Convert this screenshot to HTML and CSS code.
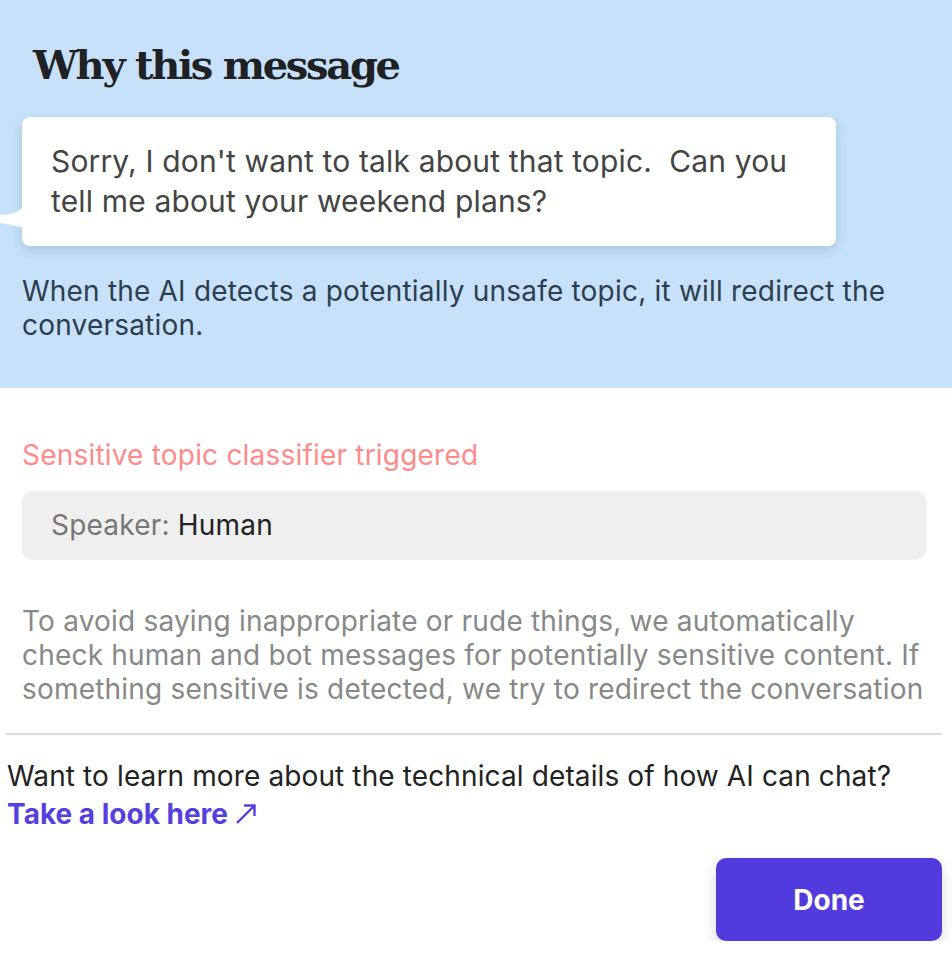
FILE: index.html
```html
<!DOCTYPE html>
<html lang="en">
<head>
  <meta charset="UTF-8">
  <meta name="viewport" content="width=device-width, initial-scale=1.0">
  <title>Why this message</title>
  <link rel="stylesheet" href="styles.css">
</head>
<body>
  <div class="hero">
    <h1>Why this message</h1>
    <div class="bubble">
      <svg class="tail" width="24" height="24" viewBox="0 0 24 24">
        <path d="M24 0 C21 6 13 10 0 10 L0 18 C8 19 16 21 24 23 Z" fill="#fff"/>
      </svg>
      <p>Sorry, I don't want to talk about that topic.&nbsp; Can you tell me about your weekend plans?</p>
    </div>
    <p class="note">When the AI detects a potentially unsafe topic, it will redirect the conversation.</p>
  </div>

  <div class="details">
    <p class="classifier">Sensitive topic classifier triggered</p>
    <div class="speaker">
      <span class="label">Speaker:</span> <span class="value">Human</span>
    </div>
    <p class="explain">To avoid saying inappropriate or rude things, we automatically check human and bot messages for potentially sensitive content. If something sensitive is detected, we try to redirect the conversation to a new topic by offering a different suggestion instead.</p>
  </div>

  <hr class="divider">

  <div class="footer">
    <p class="learn">Want to learn more about the technical details of how AI can chat?</p>
    <a class="link" href="#">Take a look here
      <svg class="arrow" width="22" height="22" viewBox="0 0 22 22">
        <path d="M2 20 L19 3 M9 2.5 H19.5 V13" fill="none" stroke="currentColor" stroke-width="2.4"/>
      </svg>
    </a>
    <div class="actions">
      <button class="done">Done</button>
    </div>
  </div>
</body>
</html>
```

FILE: styles.css
```css
body {
  margin: 0;
  font-family: Inter, "Noto Sans", sans-serif;
  background: #fff;
}
p {
  margin: 0;
}
.hero {
  background-color: #c6e1f9;
  height: 388px;
  box-sizing: border-box;
  padding: 40px 22px 0;
}
h1 {
  margin: 0 0 0 11px;
  font-family: "DejaVu Serif", serif;
  font-weight: bold;
  font-size: 40px;
  line-height: 50px;
  color: #202124;
  letter-spacing: -2.3px;
}
.bubble {
  position: relative;
  width: 814px;
  box-sizing: border-box;
  margin-top: 27px;
  padding: 24px 29px 25px;
  background: #fff;
  border-radius: 8px;
  box-shadow: 0 4px 12px rgba(40, 70, 110, 0.18);
}
.bubble p {
  font-size: 30px;
  line-height: 40px;
  letter-spacing: 0.15px;
  color: #444;
}
.tail {
  position: absolute;
  left: -22px;
  top: 88px;
}
.note {
  margin-top: 28px;
  font-size: 28px;
  line-height: 34px;
  letter-spacing: 0.2px;
  color: #2c3e50;
}
.details {
  height: 323px;
  overflow: hidden;
  padding: 0 26px 0 22px;
}
.classifier {
  margin-top: 50px;
  font-size: 28px;
  line-height: 34px;
  letter-spacing: 0.2px;
  color: #ff8a8a;
}
.speaker {
  margin-top: 19px;
  padding: 17px 29px 18px;
  background: #efefef;
  border-radius: 10px;
  font-size: 28px;
  line-height: 34px;
  letter-spacing: 0.2px;
}
.speaker .label {
  color: #777;
}
.speaker .value {
  color: #222;
}
.explain {
  margin-top: 44px;
  font-size: 28px;
  line-height: 34px;
  letter-spacing: 0.2px;
  color: #888;
}
.divider {
  margin: 22px 10px 0 6px;
  border: none;
  border-top: 2px solid #dcdcdc;
}
.footer {
  padding: 0 10px 0 7px;
}
.learn {
  margin-top: 22px;
  font-size: 28px;
  line-height: 38px;
  letter-spacing: 0.12px;
  color: #222;
}
.link {
  display: block;
  font-size: 28px;
  line-height: 38px;
  font-weight: bold;
  color: #5540dd;
  text-decoration: none;
}
.link .arrow {
  vertical-align: -1px;
}
.actions {
  display: flex;
  justify-content: flex-end;
  margin-top: 25px;
}
.done {
  width: 226px;
  height: 83px;
  border: none;
  border-radius: 10px;
  background: #523bdc;
  color: #fff;
  font-family: Inter, sans-serif;
  font-size: 28px;
  font-weight: bold;
  box-shadow: 0 6px 14px rgba(60, 60, 120, 0.2);
  cursor: pointer;
}
```
